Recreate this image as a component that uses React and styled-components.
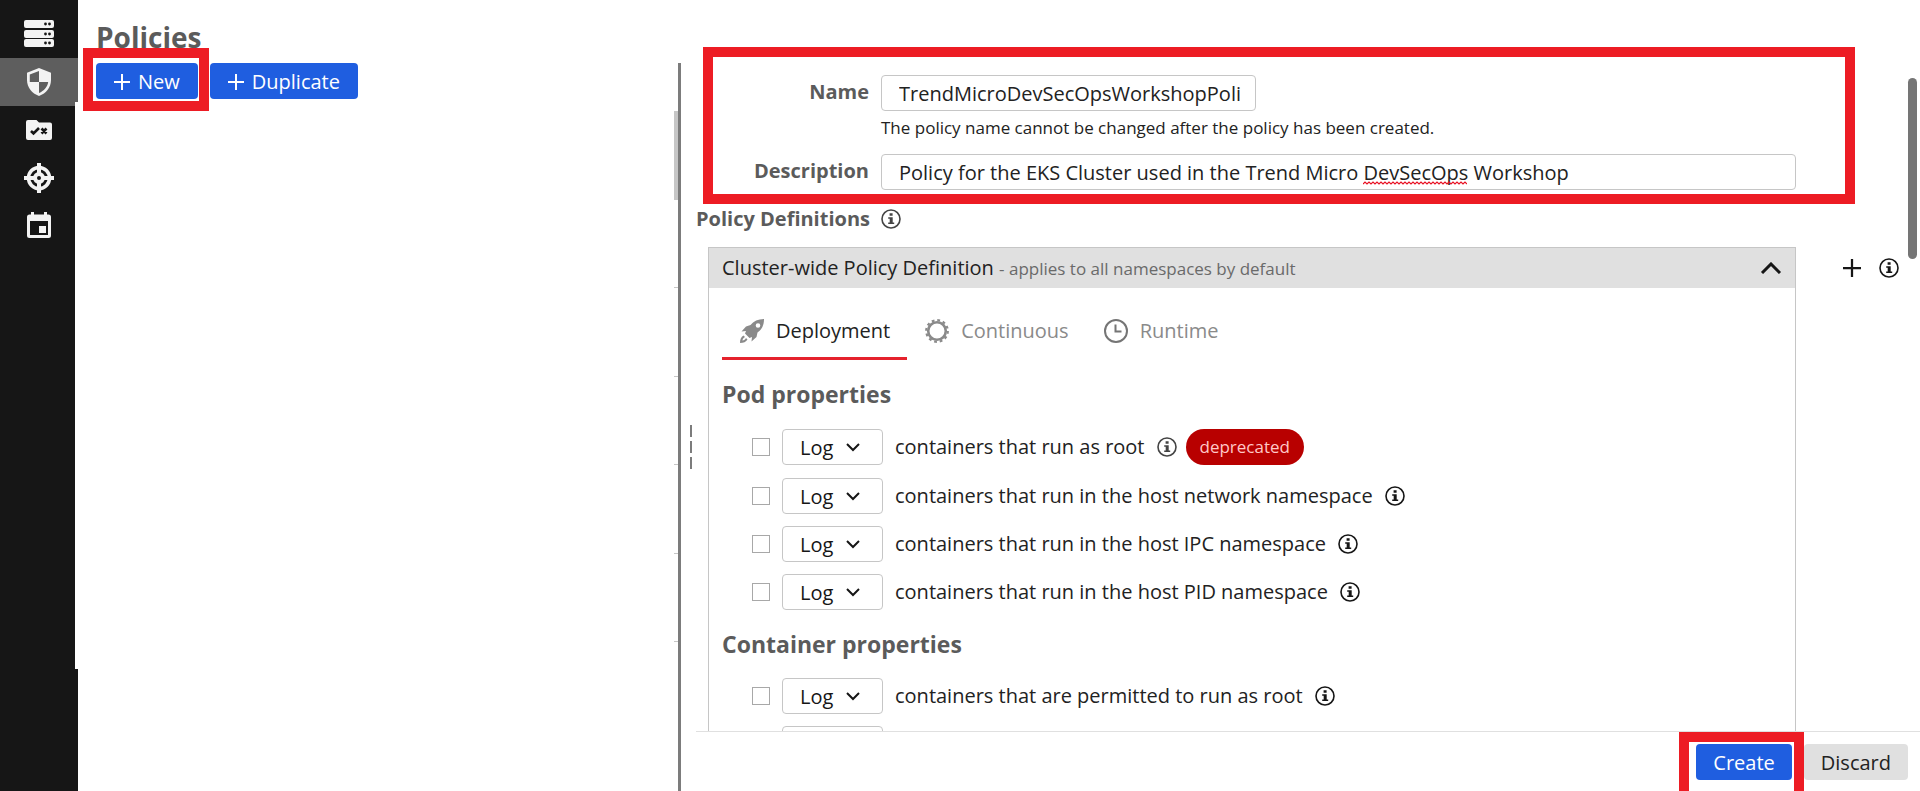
import React from "react";
import styled, { createGlobalStyle, css } from "styled-components";

const GlobalStyle = createGlobalStyle`
  *, *::before, *::after { box-sizing: border-box; }
  body {
    margin: 0;
    background: #fff;
    color: #222;
    font: 400 20px/28px "Open Sans", "Noto Sans", sans-serif;
  }
  h1, h2, h3, p, ul { margin: 0; padding: 0; }
  button, input, select { font: inherit; color: inherit; }
`;

/* ---------- icons ---------- */

const ServerIcon = () => (
  <svg width="30" height="28" viewBox="0 0 30 28" aria-hidden="true">
    {[0, 10, 19].map((y) => (
      <g key={y}>
        <rect x="0" y={y} width="30" height="8" rx="2" fill="#f3f3f3" />
        <circle cx="21.5" cy={y + 4} r="1.4" fill="#161616" />
        <circle cx="25.5" cy={y + 4} r="1.4" fill="#161616" />
      </g>
    ))}
  </svg>
);

const ShieldIcon = () => (
  <svg width="24" height="28" viewBox="0 0 24 28" aria-hidden="true">
    <path
      d="M12 0 24 4.8V12c0 7.200-4.800 13.400-12 16C4.800 25.400 0 19.200 0 12V4.800Z"
      fill="#f3f3f3"
    />
    <path d="M12 3v11H2.800V6.600ZM12 14h9.200C20.600 18.800 17 23 12 25Z" fill="#5e5e5e" />
  </svg>
);

const FolderIcon = () => (
  <svg width="26" height="20" viewBox="0 0 26 20" aria-hidden="true">
    <path
      d="M2 0h8.500l2.500 2.500H24a2 2 0 0 1 2 2V18a2 2 0 0 1-2 2H2a2 2 0 0 1-2-2V2a2 2 0 0 1 2-2Z"
      fill="#f3f3f3"
    />
    <path
      d="m5 11 2.500 2.500L13 8M15.500 8.500l5 5M20.500 8.500l-5 5"
      fill="none"
      stroke="#161616"
      strokeWidth="2.600"
    />
  </svg>
);

const TargetIcon = () => (
  <svg width="30" height="30" viewBox="0 0 30 30" fill="none" stroke="#f3f3f3" aria-hidden="true">
    <circle cx="15" cy="15" r="10.500" strokeWidth="3.600" />
    <circle cx="15" cy="15" r="4" strokeWidth="4" />
    <path d="M15 0v10M15 20v10M0 15h10M20 15h10" strokeWidth="4" />
  </svg>
);

const CalendarIcon = () => (
  <svg width="24" height="28" viewBox="0 0 24 28" aria-hidden="true">
    <path
      fillRule="evenodd"
      d="M4 0h3v2.500h10V0h3v2.500h1.500A2.500 2.500 0 0 1 24 5v18.500a2.500 2.500 0 0 1-2.500 2.500h-19A2.500 2.500 0 0 1 0 23.500V5a2.500 2.500 0 0 1 2.500-2.500H4ZM3 9v14h18V9Z"
      fill="#f3f3f3"
    />
    <rect x="12" y="14" width="7" height="7" fill="#f3f3f3" />
  </svg>
);

const PlusIcon = ({ size, stroke }) => (
  <svg width={size} height={size} viewBox="0 0 16 16" fill="none" stroke="currentColor" strokeWidth={stroke} aria-hidden="true">
    <path d="M8 0v16M0 8h16" />
  </svg>
);

const InfoGlyph = () => (
  <svg width="20" height="20" viewBox="0 0 20 20" aria-hidden="true">
    <circle cx="10" cy="10" r="9" fill="none" stroke="currentColor" strokeWidth="1.600" />
    <path d="M8.600 4.200h3v2.600h-3ZM7.200 8.300h4.500v5.300h1.500v1.500H7.200v-1.500h1.500V9.700H7.200Z" fill="currentColor" />
  </svg>
);

const ChevronUp = () => (
  <svg width="22" height="12" viewBox="0 0 22 12" aria-hidden="true">
    <path d="m2 11 9-9 9 9" fill="none" stroke="#161616" strokeWidth="3" />
  </svg>
);

const RocketIcon = () => (
  <svg width="24" height="24" viewBox="0 0 24 24" fill="#8a8a8a" aria-hidden="true">
    <path
      fillRule="evenodd"
      d="M24 0c-6 0-10.500 2-13.500 6L6 7.500 1.500 12.500l4.500-.5-1 2.500 4.500 4.500 2.500-1-.5 4.500L16.500 18l1-4.500C22 10.500 24 6 24 0ZM18 4.200a2.300 2.300 0 1 1 0 4.600 2.300 2.300 0 0 1 0-4.600Z"
    />
    <path d="M3.500 16.500 5 18c-1.500.8-2.300 1.800-2.600 3.600 1.800-.2 2.800-1 3.600-2.600l1.500 1.500C6 23 3.500 24 0 24c0-3.500 1-6 3.500-7.500Z" />
  </svg>
);

const GearIcon = () => (
  <svg width="24" height="24" viewBox="0 0 24 24" fill="none" stroke="#8a8a8a" aria-hidden="true">
    <circle cx="12" cy="12" r="8.800" strokeWidth="2.600" />
    <circle cx="12" cy="12" r="10.800" strokeWidth="2.200" strokeDasharray="2.800 2.850" />
  </svg>
);

const ClockIcon = () => (
  <svg width="24" height="24" viewBox="0 0 24 24" fill="none" stroke="#757575" strokeWidth="2" aria-hidden="true">
    <circle cx="12" cy="12" r="11" />
    <path d="M11.500 5.500V12.500H17.500" />
  </svg>
);

/* ---------- frame ---------- */

const Shell = styled.div`
  display: flex;
  height: 100vh;
  overflow: hidden;
`;

const Sidebar = styled.nav`
  position: relative;
  flex: none;
  width: 78px;
  padding-top: 10px;
  background: #161616;
`;

const SidebarNotch = styled.span`
  position: absolute;
  top: 102px;
  right: 0;
  bottom: 122px;
  width: 3px;
  background: #fff;
`;

const NavLink = styled.a`
  display: flex;
  align-items: center;
  justify-content: center;
  height: 48px;
  background: ${(p) => (p.$active ? "#5e5e5e" : "transparent")};
`;

const Highlight = styled.span`
  position: absolute;
  inset: ${(p) => p.$inset || "0"};
  border: 10px solid #ed1c24;
  pointer-events: none;
`;

const Marked = styled.span`
  position: relative;
  display: flex;
`;

const ListPane = styled.section`
  flex: none;
  display: flex;
  flex-direction: column;
  width: 600px;
  padding-top: 19px;
`;

const Title = styled.h1`
  height: 44px;
  padding-left: 18px;
  color: #5b5b5b;
  font-size: 28px;
  line-height: 36px;
  font-weight: 700;
`;

const Toolbar = styled.div`
  display: flex;
  gap: 12px;
  padding-left: 18px;
`;

const Button = styled.button`
  display: flex;
  align-items: center;
  gap: 8px;
  height: 36px;
  padding: 2px ${(p) => (p.$tight ? "17px" : "18px")} 0;
  border: 0;
  border-radius: 4px;
  background: #1f5ee0;
  color: #fff;
  white-space: nowrap;
  ${(p) =>
    p.$plain &&
    css`
      background: #e0e0e0;
      color: #222;
    `}
`;

const PolicyList = styled.ul`
  display: grid;
  grid-auto-rows: 1fr;
  align-self: flex-end;
  width: 4px;
  height: 531px;
  margin-top: 12px;
  list-style: none;
`;

const PolicyItem = styled.li`
  border-bottom: 1px solid #c6c6c6;
  background: ${(p) => (p.$selected ? "#c6c6c6" : "transparent")};
`;

const Splitter = styled.div`
  flex: none;
  display: flex;
  flex-direction: column;
  justify-content: center;
  align-items: flex-end;
  gap: 4px;
  width: 18px;
  margin-top: 63px;
  padding: 40px 4px 0 0;
  border-left: 3px solid #7c7c7c;
`;

const GripDash = styled.span`
  width: 2px;
  height: 12px;
  background: #7c7c7c;
`;

const DetailPane = styled.main`
  position: relative;
  flex: 1;
  display: flex;
  flex-direction: column;
  min-width: 0;
  padding-top: 47px;
`;

const DetailBody = styled.div`
  flex: 1;
  min-height: 0;
  overflow-y: auto;
  scrollbar-width: none;
`;

const ScrollThumb = styled.span`
  position: absolute;
  top: 78px;
  right: 3px;
  width: 9px;
  height: 181px;
  border-radius: 5px;
  background: #757575;
`;

const Footer = styled.footer`
  flex: none;
  display: flex;
  justify-content: flex-end;
  gap: 12px;
  height: 60px;
  padding: 12px 12px 0 0;
  border-top: 1px solid #e0e0e0;
`;

/* ---------- form ---------- */

const Form = styled.div`
  position: relative;
  display: grid;
  grid-template-columns: 166px 1fr;
  column-gap: 12px;
  row-gap: 12px;
  margin: 0 65px 0 7px;
  padding: 28px 59px 14px 0;
`;

const Label = styled.label`
  color: #5b5b5b;
  font-weight: 700;
  line-height: 34px;
  text-align: right;
`;

const Field = styled.div`
  position: relative;
  display: flex;
  flex-direction: column;
`;

const TextInput = styled.input`
  width: ${(p) => p.$width || "100%"};
  height: 36px;
  padding: 0 8px 0 17px;
  border: 1px solid #c6c6c6;
  border-radius: 4px;
  background: #fff;
  outline: 0;
`;

const Help = styled.p`
  margin: 5px 0 2px;
  font-size: 17px;
  line-height: 24px;
`;

const Squiggle = styled.svg`
  position: absolute;
  top: 27px;
  left: 482px;
`;

const SectionHead = styled.div`
  display: flex;
  align-items: center;
  gap: 12px;
  height: 30px;
`;

const SectionTitle = styled.h2`
  width: 173px;
  color: #5b5b5b;
  font-size: 20px;
  font-weight: 700;
  text-align: right;
  white-space: nowrap;
`;

const IconButton = styled.button`
  display: flex;
  padding: 0;
  border: 0;
  background: none;
  color: ${(p) => (p.$soft ? "#444" : "#161616")};
`;

const DefinitionRow = styled.div`
  display: flex;
  margin: 13px 21px 0 12px;
`;

const Panel = styled.section`
  flex: 1;
  border: 1px solid #c6c6c6;
`;

const PanelHead = styled.header`
  display: flex;
  align-items: center;
  justify-content: space-between;
  height: 40px;
  padding: 0 13px 0 13px;
  background: #e0e0e0;
`;

const PanelTitle = styled.h3`
  font-size: 20px;
  font-weight: 400;
  small {
    color: #6a6a6a;
    font-size: 17px;
  }
`;

const PanelBody = styled.div`
  padding: 16px 13px 0;
`;

const SideActions = styled.div`
  display: flex;
  align-items: center;
  justify-content: flex-end;
  gap: 18px;
  width: 103px;
  height: 42px;
`;

const Tabs = styled.div`
  display: flex;
`;

const Tab = styled.button`
  display: flex;
  align-items: center;
  gap: 12px;
  height: 56px;
  padding: 0 17px 0 18px;
  border: 0;
  border-bottom: 3px solid ${(p) => (p.$active ? "#e5222d" : "transparent")};
  background: none;
  color: ${(p) => (p.$active ? "#222" : "#8a8a8a")};
`;

const GroupTitle = styled.h3`
  margin: 20px 0;
  color: #5b5b5b;
  font-size: 23px;
  line-height: 28px;
  font-weight: 700;
`;

const Rules = styled.div`
  display: flex;
  flex-direction: column;
  gap: 12px;
  padding-left: 30px;
`;

const Rule = styled.div`
  display: flex;
  align-items: center;
  height: ${(p) => (p.$badged ? "38px" : "36px")};
`;

const Checkbox = styled.input`
  appearance: none;
  flex: none;
  width: 18px;
  height: 18px;
  margin: 0 12px 0 0;
  border: 1px solid #a8a8a8;
  background: #fff;
`;

const SelectBox = styled.span`
  position: relative;
  flex: none;
  width: 101px;
  height: 36px;
  margin-right: 12px;
  svg {
    position: absolute;
    top: 14px;
    right: 23px;
    pointer-events: none;
  }
`;

const Select = styled.select`
  appearance: none;
  width: 100%;
  height: 36px;
  padding: 2px 17px 0;
  border: 1px solid #c6c6c6;
  border-radius: 4px;
  background: #fff;
  color: #161616;
`;

const RuleText = styled.label`
  margin-right: 12px;
  white-space: nowrap;
`;

const Badge = styled.span`
  height: 36px;
  margin-left: 9px;
  padding: 0 14px;
  border-radius: 18px;
  background: #b80000;
  color: #ffc8c8;
  font-size: 17px;
  line-height: 36px;
`;

const Info = ({ label, soft }) => (
  <IconButton type="button" aria-label={label} $soft={soft}>
    <InfoGlyph />
  </IconButton>
);

const RuleRow = ({ id, text, deprecated }) => (
  <Rule $badged={deprecated}>
    <Checkbox type="checkbox" id={id} aria-label={text ? undefined : "New rule"} />
    <SelectBox>
      <Select aria-label="Action">{text && <option>Log</option>}</Select>
      <svg width="14" height="9" viewBox="0 0 14 9" aria-hidden="true">
        <path d="m1 1 6 6 6-6" fill="none" stroke="#161616" strokeWidth="2" />
      </svg>
    </SelectBox>
    {text && (
      <>
        <RuleText htmlFor={id}>{text}</RuleText>
        <Info label="More information" soft={deprecated} />
      </>
    )}
    {deprecated && <Badge>deprecated</Badge>}
  </Rule>
);

const podRules = [
  { id: "pod-root", text: "containers that run as root", deprecated: true },
  { id: "pod-net", text: "containers that run in the host network namespace" },
  { id: "pod-ipc", text: "containers that run in the host IPC namespace" },
  { id: "pod-pid", text: "containers that run in the host PID namespace" },
];

const containerRules = [
  { id: "ctr-root", text: "containers that are permitted to run as root" },
  { id: "ctr-new" },
];

const navItems = [
  { label: "Clusters", Icon: ServerIcon },
  { label: "Policies", Icon: ShieldIcon, active: true },
  { label: "Rulesets", Icon: FolderIcon },
  { label: "Scanners", Icon: TargetIcon },
  { label: "Events", Icon: CalendarIcon },
];

const wave = "M0 3" + "l2-2l2 2".repeat(26);

export default function App() {
  return (
    <>
      <GlobalStyle />
      <Shell>
        <Sidebar>
          {navItems.map(({ label, Icon, active }) => (
            <NavLink key={label} href="#" aria-label={label} $active={active}>
              <Icon />
            </NavLink>
          ))}
          <SidebarNotch />
        </Sidebar>

        <ListPane>
          <Title>Policies</Title>
          <Toolbar>
            <Marked>
              <Button type="button">
                <PlusIcon size={16} stroke={2} />
                New
              </Button>
              <Highlight $inset="-15px -11px -12px -13px" />
            </Marked>
            <Button type="button">
              <PlusIcon size={16} stroke={2} />
              Duplicate
            </Button>
          </Toolbar>
          <PolicyList>
            <PolicyItem $selected />
            <PolicyItem />
            <PolicyItem />
            <PolicyItem />
            <PolicyItem />
            <PolicyItem />
          </PolicyList>
        </ListPane>

        <Splitter>
          <GripDash />
          <GripDash />
          <GripDash />
        </Splitter>

        <DetailPane>
          <DetailBody>
            <Form>
              <Label htmlFor="name">Name</Label>
              <Field>
                <TextInput id="name" $width="375px" defaultValue="TrendMicroDevSecOpsWorkshopPoli" />
                <Help>The policy name cannot be changed after the policy has been created.</Help>
              </Field>
              <Label htmlFor="description">Description</Label>
              <Field>
                <TextInput
                  id="description"
                  spellCheck={false}
                  defaultValue="Policy for the EKS Cluster used in the Trend Micro DevSecOps Workshop"
                />
                <Squiggle width="104" height="4" viewBox="0 0 104 4" aria-hidden="true">
                  <path d={wave} fill="none" stroke="#e81123" strokeWidth="1.200" />
                </Squiggle>
              </Field>
              <Highlight />
            </Form>

            <SectionHead>
              <SectionTitle>Policy Definitions</SectionTitle>
              <Info label="About policy definitions" soft />
            </SectionHead>

            <DefinitionRow>
              <Panel>
                <PanelHead>
                  <PanelTitle>
                    Cluster-wide Policy Definition <small>- applies to all namespaces by default</small>
                  </PanelTitle>
                  <IconButton type="button" aria-label="Collapse">
                    <ChevronUp />
                  </IconButton>
                </PanelHead>
                <PanelBody>
                  <Tabs role="tablist">
                    <Tab type="button" role="tab" aria-selected="true" $active>
                      <RocketIcon />
                      Deployment
                    </Tab>
                    <Tab type="button" role="tab" aria-selected="false">
                      <GearIcon />
                      Continuous
                    </Tab>
                    <Tab type="button" role="tab" aria-selected="false">
                      <ClockIcon />
                      Runtime
                    </Tab>
                  </Tabs>
                  <GroupTitle>Pod properties</GroupTitle>
                  <Rules>
                    {podRules.map((r) => (
                      <RuleRow key={r.id} {...r} />
                    ))}
                  </Rules>
                  <GroupTitle>Container properties</GroupTitle>
                  <Rules>
                    {containerRules.map((r) => (
                      <RuleRow key={r.id} {...r} />
                    ))}
                  </Rules>
                </PanelBody>
              </Panel>
              <SideActions>
                <IconButton type="button" aria-label="Add definition">
                  <PlusIcon size={18} stroke={2} />
                </IconButton>
                <Info label="About namespaced definitions" />
              </SideActions>
            </DefinitionRow>
          </DetailBody>

          <Footer>
            <Marked>
              <Button type="button" $tight>
                Create
              </Button>
              <Highlight $inset="-12px -12px -11px -17px" />
            </Marked>
            <Button type="button" $plain $tight>
              Discard
            </Button>
          </Footer>
          <ScrollThumb />
        </DetailPane>
      </Shell>
    </>
  );
}
